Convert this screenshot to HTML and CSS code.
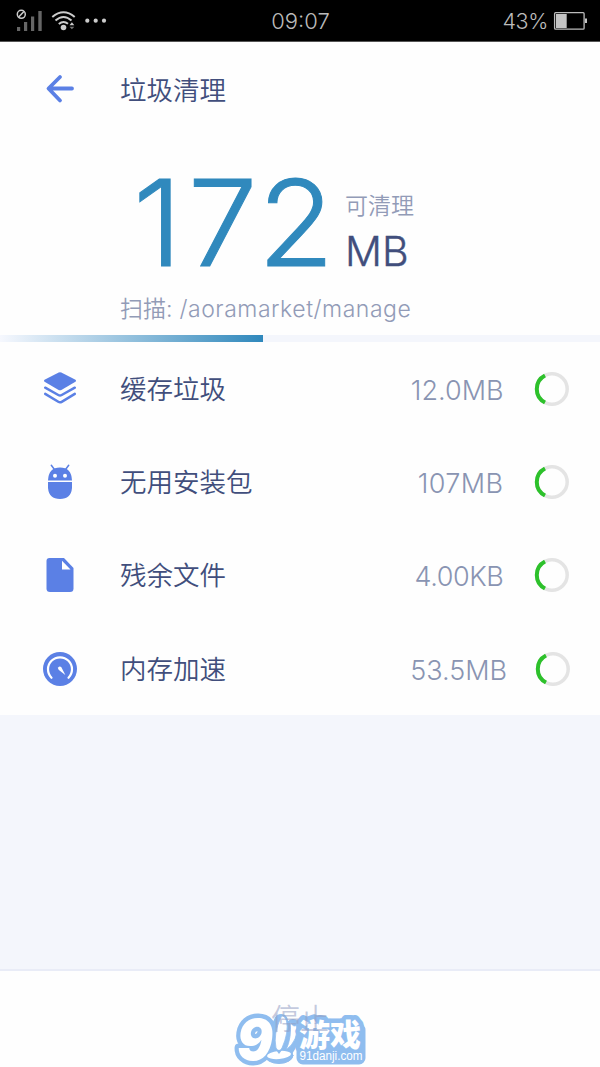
FILE: index.html
```html
<!DOCTYPE html>
<html lang="zh-CN">
<head>
<meta charset="utf-8">
<title>垃圾清理</title>
<link rel="stylesheet" href="styles.css">
</head>
<body>
<div class="status">
  <svg class="signals" width="96" height="26" viewBox="14 8 96 26">
    <g fill="#666"><rect x="17" y="27" width="3.2" height="4"/><rect x="24" y="22" width="3.2" height="9"/><rect x="31" y="16.5" width="3.2" height="14.5"/><rect x="38.300" y="11" width="3.400" height="20"/></g>
    <g fill="none" stroke="#ccc"><circle cx="21.300" cy="14.300" r="4" stroke-width="1.500"/><path d="M18.700 17l5.200-5.400" stroke-width="1.500"/>
    <path d="M52.300 17Q63.500 7.500 74.700 17M55.500 20.500Q63.500 13.500 71.500 20.500M58.800 24Q63.500 20 68 23.800" stroke-width="2"/></g>
    <g fill="#ccc"><circle cx="63.500" cy="27.500" r="2.800"/><path d="M69.500 25.300l2.400-3 2.400 3z"/><circle cx="87.300" cy="20.700" r="2.100"/><circle cx="95.700" cy="20.700" r="2.100"/><circle cx="104" cy="20.700" r="2.100"/></g>
    <path d="M69.500 26.700h4.800l-2.400 2.600z" fill="#777"/>
  </svg>
  <span class="clock">09:07</span>
  <div class="power"><span class="percent">43%</span>
    <svg width="34" height="20" viewBox="553 11 34 20"><rect x="554.600" y="12.700" width="29.500" height="16.500" rx="1" fill="none" stroke="#bbb" stroke-width="1.300"/><path d="M556 14h10.700v14H556zM585 18.500h2v4.500h-2z" fill="#c4c4c4"/></svg>
  </div>
</div>
<header class="header">
  <svg class="back" width="30" height="30" viewBox="45 73 30 30"><path d="M60 76L48.500 87.500l11.500 12M49 87.500h23" fill="none" stroke="#5b80e5" stroke-width="3.800" stroke-linecap="round" stroke-linejoin="round"/></svg>
  <h1 class="title">垃圾清理</h1>
</header>
<section class="summary">
  <div class="total"><span class="number"><span class="lead">1</span>72</span><div class="unit-col"><span class="hint">可清理</span><span class="unit">MB</span></div></div>
  <div class="scan"><span class="scan-label">扫描:</span><span class="scan-path">/aoramarket/manage</span></div>
</section>
<div class="progress"><div class="progress-fill"></div></div>
<main class="list">
  <div class="row">
    <svg class="icon" width="36" height="36" viewBox="0 0 36 36"><path d="M16.700 1.500q1.300-.5 2.600 0L33 8.500q2 1.200 0 2.600l-13.200 7.700q-1.800 1-3.600 0L3 11.100q-2-1.400 0-2.600z" fill="#5b80e5"/><path d="M3.200 16.700l13.100 7.300q1.700.9 3.400 0l13.100-7.300M3.200 22.900l13.100 7.900q1.700 1 3.400 0l13.100-7.900" stroke="#5b80e5" stroke-width="2.500" fill="none" stroke-linecap="round"/></svg>
    <span class="name">缓存垃圾</span><span class="size size-a">12.0MB</span>
    <svg class="spinner" width="36" height="36" viewBox="0 0 36 36"><circle cx="18" cy="18" r="15.200" class="track"/><path class="arc" d="M11 4.500A15.200 15.200 0 0 0 11 31.500"/></svg>
  </div>
  <div class="row">
    <svg class="icon" width="36" height="36" viewBox="0 0 36 36"><path d="M6 16.500Q6.500 3.500 18 3.500T30 16.500zM6 18h24v6Q29 35 18 35T6 24z" fill="#5b80e5"/><path d="M9.300 1.300l3 4M26.700 1.300l-3 4" stroke="#5b80e5" stroke-width="1.500" stroke-linecap="round"/><circle cx="13" cy="11.800" r="2" fill="#fff"/><circle cx="23" cy="11.800" r="2" fill="#fff"/></svg>
    <span class="name">无用安装包</span><span class="size size-b">107MB</span>
    <svg class="spinner" width="36" height="36" viewBox="0 0 36 36"><circle cx="18" cy="18" r="15.200" class="track"/><path class="arc" d="M11 4.500A15.200 15.200 0 0 0 11 31.500"/></svg>
  </div>
  <div class="row">
    <svg class="icon" width="36" height="36" viewBox="0 0 36 36"><path d="M7.500 1H22l9.500 10v20.500q0 3.500-3.500 3.500H8q-3.500 0-3.500-3.500V4q0-3 3-3z" fill="#5b80e5"/><path d="M20 3.700v8.800h8.500z" fill="#fff"/></svg>
    <span class="name">残余文件</span><span class="size size-c">4.00KB</span>
    <svg class="spinner" width="36" height="36" viewBox="0 0 36 36"><circle cx="18" cy="18" r="15.200" class="track"/><path class="arc" d="M11 4.500A15.200 15.200 0 0 0 11 31.500"/></svg>
  </div>
  <div class="row row-last">
    <svg class="icon" width="36" height="36" viewBox="0 0 36 36"><circle cx="18" cy="18" r="17" fill="#5b80e5"/><path d="M9.500 26.800A12 12 0 1 1 26.500 26.800" fill="none" stroke="#fff" stroke-width="2.200" stroke-linecap="round"/><path d="M16.200 16.500q1.500-2 3.200-.2l3.900 7.700-6.400-5.100q-1.300-1.200-.7-2.400z" fill="#fff"/></svg>
    <span class="name">内存加速</span><span class="size size-d">53.5MB</span>
    <svg class="spinner" width="36" height="36" viewBox="0 0 36 36"><circle cx="18" cy="18" r="15.200" class="track"/><path class="arc" d="M11 4.500A15.200 15.200 0 0 0 11 31.500"/></svg>
  </div>
</main>
<footer class="footer">
  <svg class="watermark" width="144" height="56" viewBox="228 1011 144 56">
    <g stroke="#8fbdef" fill="#8fbdef" stroke-linejoin="round" stroke-linecap="round">
      <path d="M281 1021Q274 1034 277 1052M293 1026Q293 1045 283 1053" stroke-width="14" fill="none"/>
      <ellipse cx="279" cy="1055.500" rx="14" ry="8"/>
      <rect x="299" y="1026" width="64" height="36" rx="4" stroke-width="5"/>
    </g>
    <text class="wm-nine" x="237" y="1059.500" textLength="36" lengthAdjust="spacingAndGlyphs">9</text>
    <g fill="#fff">
      <path d="M281 1017Q273 1034 276 1048Q279 1053 282 1048Q289 1032 286.500 1021Q284 1014 281 1017zM290 1022Q294 1028 296.500 1025Q299 1040 286 1050Q292 1037 290 1022z" stroke="#8fbdef" stroke-width=".8"/>
      <ellipse cx="279" cy="1055" rx="12" ry="4" transform="rotate(-5 279 1055)"/><path d="M276 1050l6 0-3 4z" fill="#8fbdef"/>
    </g>
    <text class="wm-game" x="299" y="1046" textLength="62" lengthAdjust="spacingAndGlyphs">游戏</text>
    <text class="wm-site" x="299.500" y="1060" textLength="63" lengthAdjust="spacingAndGlyphs">91danji.com</text>
  </svg>
  <span class="stop">停止</span>
</footer>
</body>
</html>
```
FILE: styles.css
```css
* { box-sizing: border-box; }
body { margin: 0; width: 600px; height: 1067px; overflow: hidden; display: flex; flex-direction: column; background: #f4f6fc; color: #414e7c; font-family: Inter, "Noto Sans CJK SC", sans-serif; font-weight: 300; white-space: nowrap; }
svg { display: block; flex: none; }
.status { height: 42px; flex: none; display: grid; grid-template-columns: 1fr auto 1fr; align-items: center; background: #000; border-bottom: 1px solid #555; padding: 0 13px 0 14px; color: #bbb; font-size: 22px; }
.clock { line-height: 40px; padding-top: 1px; }
.power { display: flex; justify-content: flex-end; align-items: center; gap: 5px; }
.percent { font-size: 21.500px; letter-spacing: -.4px; }
.header { height: 94px; flex: none; background: #fefefe; display: flex; align-items: center; padding-left: 45px; }
.title { margin: 2px 0 0 45px; font-size: 26.500px; line-height: 40px; font-weight: 350; }
.summary { height: 199px; flex: none; background: #fefefe; padding: 23px 0 0 120px; }
.total { height: 133px; display: flex; padding-left: 13px; }
.number { color: #3089bd; font-size: 120px; line-height: 128px; width: 212px; font-weight: 300; -webkit-text-stroke: 1px #3089bd; transform: scaleX(1.04); transform-origin: left; }
.lead { letter-spacing: 5.500px; }
.unit-col { display: flex; flex-direction: column; }
.hint { color: #929bb7; font-size: 23px; line-height: 32px; margin-top: 31px; font-weight: 350; }
.unit { font-size: 41px; line-height: 46px; margin-top: 6px; font-weight: 300; -webkit-text-stroke: .4px #414e7c; }
.scan { display: flex; color: #929bb7; font-size: 23px; line-height: 34px; gap: 7px; font-weight: 350; }
.scan-path { letter-spacing: .53px; }
.progress { height: 7px; flex: none; background: #f4f6fc; }
.progress-fill { width: 263px; height: 7px; background: linear-gradient(90deg, #f6f8fe, #2f88bc); }
.list { height: 373px; flex: none; background: #fefefe; }
.row { height: 93.300px; display: flex; align-items: center; padding: 0 30.500px 0 42px; }
.name { margin-left: 42px; font-size: 26.500px; line-height: 40px; font-weight: 350; }
.size { margin-left: auto; margin-right: 30px; color: #8994b2; font-size: 27px; line-height: 40px; padding-top: 4px; }
.size-b { letter-spacing: .4px; }
.size-c { letter-spacing: -.4px; }
.row-last { padding-right: 29px; }
.row-last .size { margin-right: 28px; }
.track { fill: none; stroke: #e4e4e4; stroke-width: 3.500; }
.arc { fill: none; stroke: #2dc12b; stroke-width: 4; }
.footer { position: relative; margin-top: auto; height: 98px; background: #fefefe; border-top: 2px solid #e9ecf7; text-align: center; }
.stop { position: relative; display: block; padding-top: 30px; color: rgba(146, 157, 195, .55); font-size: 29px; line-height: 38px; font-weight: 350; }
.watermark { position: absolute; left: 228px; bottom: 0; overflow: visible; }
.watermark text { fill: #fff; stroke: #8fbdef; stroke-linejoin: round; paint-order: stroke; }
.watermark .wm-nine { font: italic 900 57px Inter, sans-serif; stroke-width: 9px; }
.watermark .wm-game { font: 900 31px "Noto Sans CJK SC", sans-serif; stroke-width: 9px; }
.watermark .wm-site { font: 400 12px "Liberation Sans", sans-serif; stroke: none; }
```
